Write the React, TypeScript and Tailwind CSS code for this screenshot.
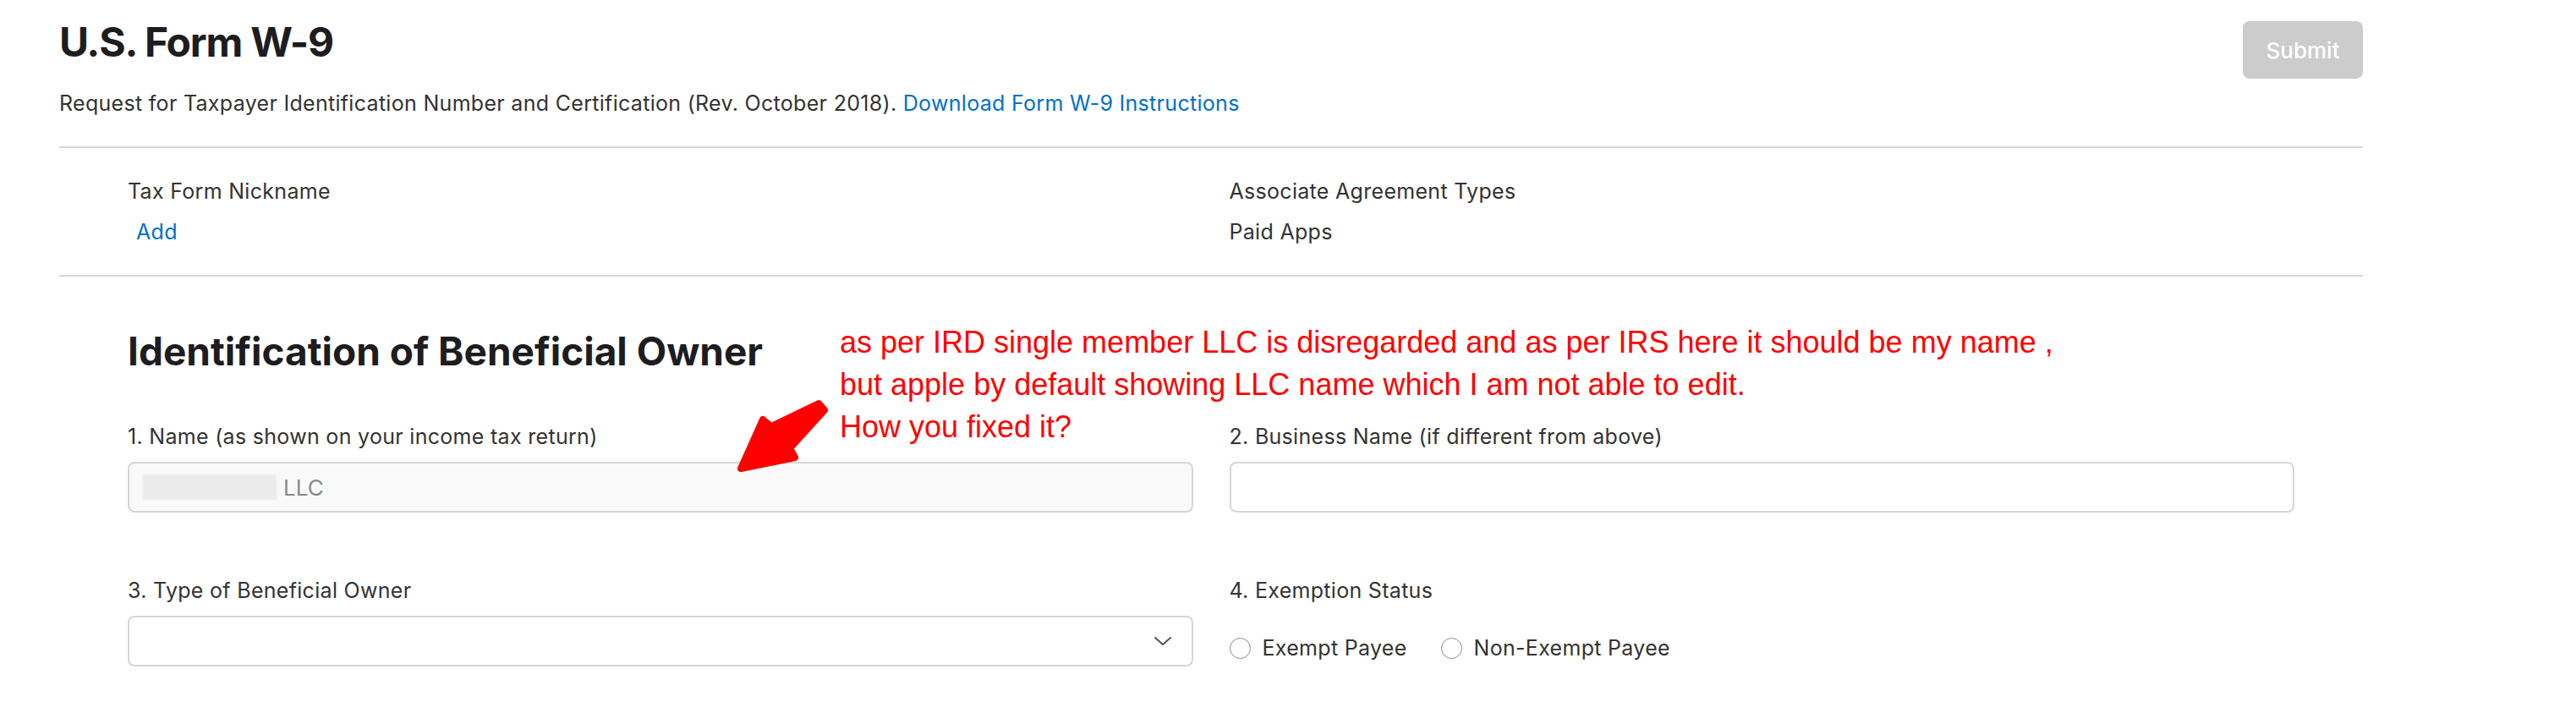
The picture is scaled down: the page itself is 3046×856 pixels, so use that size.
const textCls = 'text-[25px] leading-[32px] tracking-[0.3px]';
const labelCls = `${textCls} text-[#333333]`;

function FieldLabel({ children }: { children: React.ReactNode }) {
  return <p className={labelCls}>{children}</p>;
}

function Radio({ label }: { label: string }) {
  return (
    <label className="flex items-center gap-[14px]">
      <span className="w-[25px] h-[25px] rounded-full border-[1.5px] border-[#8c8c8c] bg-white" />
      <span className={labelCls}>{label}</span>
    </label>
  );
}

export default function App() {
  return (
    <div className="relative w-[3046px] h-[856px] overflow-hidden bg-white font-['Inter',sans-serif]">
      <div className="pl-[70px] pr-[252px] pt-[21px]">
        {/* Header */}
        <div className="flex items-start justify-between pb-[35px] border-b-2 border-[#d6d6d6]">
          <div>
            <h1 className="text-[48px] leading-[58px] font-bold tracking-tight text-[#1d1d1f]">U.S. Form W-9</h1>
            <p className={`mt-[27px] ${labelCls}`}>
              Request for Taxpayer Identification Number and Certification (Rev. October 2018).{' '}
              <a className="text-[#0070c9]">Download Form W-9 Instructions</a>
            </p>
          </div>
          <button className="mt-[4px] h-[68px] w-[142px] rounded-[8px] bg-[#cccccc] text-[26px] font-medium text-white">
            Submit
          </button>
        </div>

        {/* Nickname / agreement types */}
        <div className="grid grid-cols-2 gap-x-[43px] px-[81px] pt-[35px] pb-[35px] border-b-2 border-[#d6d6d6]">
          <div>
            <FieldLabel>Tax Form Nickname</FieldLabel>
            <button className={`mt-[16px] pl-[10px] ${textCls} text-[#0070c9]`}>Add</button>
          </div>
          <div>
            <FieldLabel>Associate Agreement Types</FieldLabel>
            <p className={`mt-[16px] ${labelCls}`}>Paid Apps</p>
          </div>
        </div>

        {/* Beneficial owner */}
        <div className="px-[81px] pt-[61px]">
          <h2 className="text-[46px] leading-[54px] font-bold text-[#1d1d1f]">
            Identification of Beneficial Owner
          </h2>

          <div className="grid grid-cols-2 gap-x-[43px] mt-[58px]">
            <div>
              <FieldLabel>1. Name (as shown on your income tax return)</FieldLabel>
              <div className="mt-[14px] h-[60px] rounded-[8px] border-2 border-[#d6d6d6] bg-[#f9f9f9] flex items-center pl-[16px]">
                <span className="w-[158px] h-[30px] bg-[#ebebeb] blur-[1px]" />
                <span className="ml-[8px] text-[26px] text-[#8a8a8a]">LLC</span>
              </div>
            </div>
            <div>
              <FieldLabel>2. Business Name (if different from above)</FieldLabel>
              <div className="mt-[14px] h-[60px] rounded-[8px] border-2 border-[#d6d6d6] bg-white" />
            </div>
          </div>

          <div className="grid grid-cols-2 gap-x-[43px] mt-[76px]">
            <div>
              <FieldLabel>3. Type of Beneficial Owner</FieldLabel>
              <div className="mt-[14px] h-[60px] rounded-[8px] border-2 border-[#d6d6d6] bg-white flex items-center justify-end pr-[24px]">
                <svg width="20" height="10" viewBox="0 0 20 10" fill="none">
                  <polyline points="1,1 10,9 19,1" stroke="#555555" strokeWidth="2" strokeLinecap="round" strokeLinejoin="round" />
                </svg>
              </div>
            </div>
            <div>
              <FieldLabel>4. Exemption Status</FieldLabel>
              <div className="mt-[36px] flex items-center gap-[40px]">
                <Radio label="Exempt Payee" />
                <Radio label="Non-Exempt Payee" />
              </div>
            </div>
          </div>
        </div>
      </div>

      {/* Red note and arrow drawn over the form */}
      <div className="absolute left-[993px] top-[380px] font-['Liberation_Sans',Arial,sans-serif] text-[36px] leading-[50px] text-[#ff0000] whitespace-nowrap">
        <p>as per IRD single member LLC is disregarded and as per IRS here it should be my name ,</p>
        <p>but apple by default showing LLC name which I am not able to edit.</p>
        <p>How you fixed it?</p>
      </div>
      <svg className="absolute inset-0 pointer-events-none" width="3046" height="856" viewBox="0 0 3046 856">
        <polygon
          points="968,477 975,485 934,530 940,541 876,554 902,496 912,504"
          fill="#ff0000"
          stroke="#ff0000"
          strokeWidth="8"
          strokeLinejoin="round"
        />
      </svg>
    </div>
  );
}
